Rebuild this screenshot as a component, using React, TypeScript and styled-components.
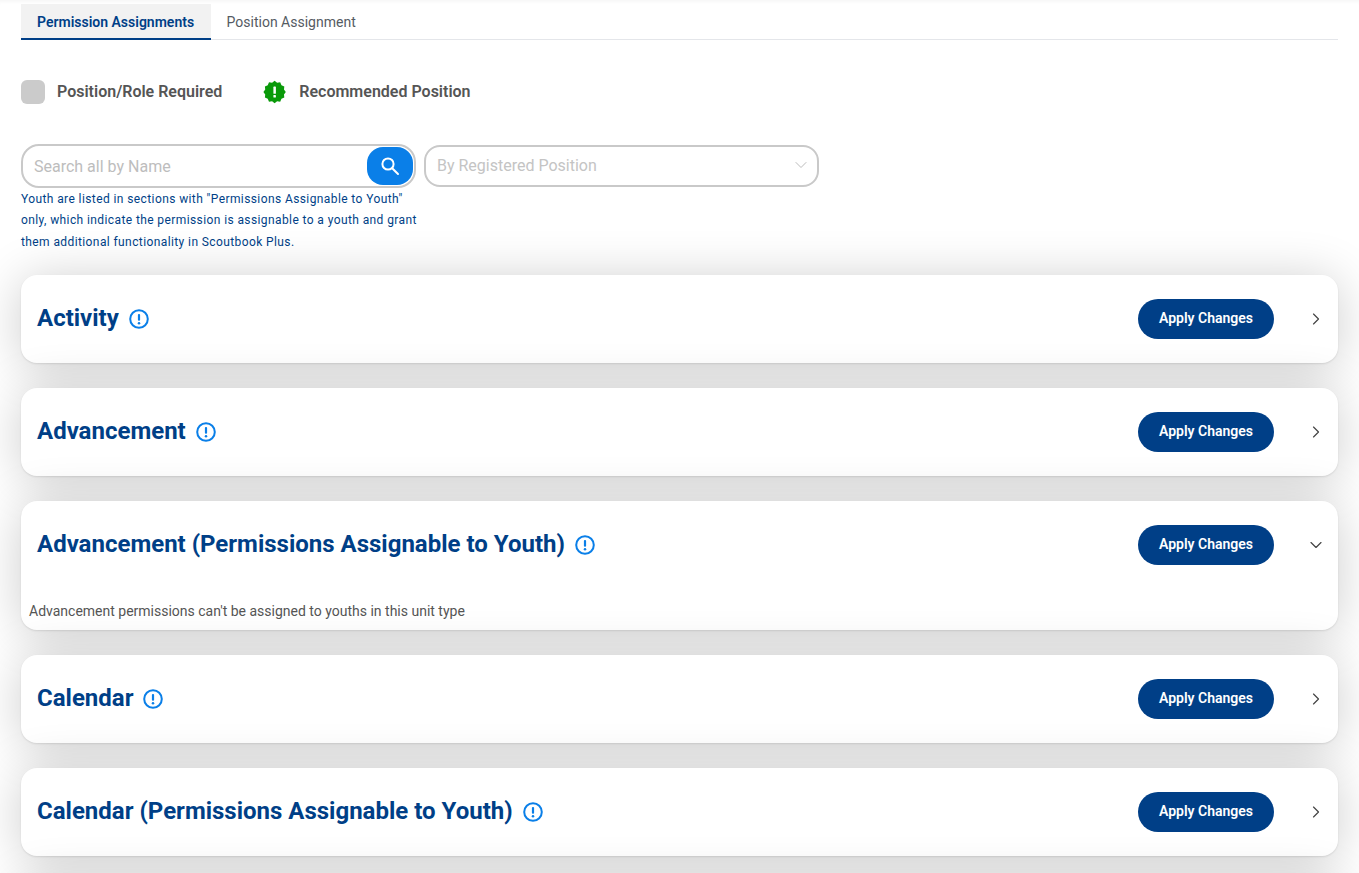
import React from 'react';
import styled, { createGlobalStyle } from 'styled-components';
import { ChevronRight, ChevronDown } from 'lucide-react';

const navy = '#003f87';
const blue = '#0a7fe8';

const GlobalStyle = createGlobalStyle`
  html, body {
    margin: 0;
    padding: 0;
    background: #fff;
    overflow: hidden;
  }
  body {
    font-family: Roboto, "Liberation Sans", sans-serif;
  }
`;

const Page = styled.div`
  height: 873px;
  padding: 4px 21px 0;
  box-sizing: border-box;
  overflow: hidden;
  box-shadow: inset 0 4px 4px -3px rgba(0, 0, 0, 0.05);
`;

const Tabs = styled.div`
  display: flex;
  height: 36px;
  border-bottom: 1px solid #e4e6ea;
  box-sizing: border-box;
`;

const Tab = styled.div<{ $active?: boolean }>`
  height: 36px;
  display: flex;
  align-items: center;
  font-size: 14px;
  box-sizing: border-box;
  padding: ${p => (p.$active ? '1px 16px 0 16px' : '0 16px 0 15.6px')};
  width: ${p => (p.$active ? '190px' : 'auto')};
  font-weight: ${p => (p.$active ? 600 : 400)};
  color: ${p => (p.$active ? navy : '#555b63')};
  background: ${p => (p.$active ? '#f2f2f2' : 'transparent')};
  border-bottom: ${p => (p.$active ? `2px solid ${navy}` : 'none')};
`;

const Legend = styled.div`
  display: flex;
  align-items: center;
  margin-top: 38px;
  height: 26px;
`;

const LegendItem = styled.div`
  display: flex;
  align-items: center;
  font-size: 16px;
  font-weight: 600;
  color: #555;
  margin-right: 41px;
`;

const Swatch = styled.span`
  width: 24px;
  height: 24px;
  margin-top: 2px;
  border-radius: 6px;
  background: #cbcbcb;
  margin-right: 12px;
`;

const Badge = styled.svg`
  width: 24px;
  height: 24px;
  margin-top: 2px;
  margin-right: 12px;
`;

const Filters = styled.div`
  display: flex;
  align-items: flex-start;
  gap: 8px;
  margin-top: 40px;
`;

const SearchColumn = styled.div`
  width: 395px;
`;

const SearchBox = styled.div`
  height: 44px;
  border: 2px solid #c9c9c9;
  border-radius: 18px;
  box-sizing: border-box;
  display: flex;
  align-items: center;
  justify-content: space-between;
  padding: 0 1px 0 11px;
  font-size: 16px;
  color: #bdbdbd;
`;

const SearchButton = styled.span`
  width: 46px;
  height: 38px;
  border-radius: 16px;
  background: ${blue};
  display: flex;
  align-items: center;
  justify-content: center;
`;

const Hint = styled.p`
  width: 402px;
  margin: 1px 0 0;
  font-size: 12px;
  line-height: 21.3px;
  letter-spacing: 0.4px;
  color: ${navy};
`;

const SelectBox = styled.div`
  width: 395px;
  height: 42px;
  margin-top: 1px;
  border: 2px solid #c9c9c9;
  border-radius: 16px;
  box-sizing: border-box;
  display: flex;
  align-items: center;
  justify-content: space-between;
  padding: 0 6px 2px 11px;
  font-size: 16px;
  color: #c4c4c4;
`;

const Cards = styled.div`
  display: flex;
  flex-direction: column;
  gap: 25px;
  margin-top: 22px;
`;

const Card = styled.section`
  background: #fff;
  border-radius: 16px;
  box-shadow: 0 1px 2px rgba(0, 0, 0, 0.1), 0 4px 50px rgba(0, 0, 0, 0.2);
`;

const NextCard = styled(Card)`
  height: 88px;
`;

const CardHeader = styled.div`
  height: 88px;
  padding: 0 12px 0 16px;
  display: flex;
  align-items: center;
`;

const CardTitle = styled.h2`
  margin: 0 10px 2px 0;
  font-size: 24px;
  font-weight: 700;
  color: ${navy};
`;

const InfoIcon = styled.svg`
  width: 20px;
  height: 20px;
  flex: none;
`;

const ApplyButton = styled.button`
  width: 136px;
  height: 40px;
  margin-left: auto;
  margin-right: 32px;
  padding: 0 0 2px;
  border: none;
  border-radius: 20px;
  background: ${navy};
  color: #fff;
  font-family: inherit;
  font-size: 14px;
  font-weight: 600;
`;

const Toggle = styled.span`
  width: 20px;
  display: flex;
  justify-content: center;
  color: #444;
`;

const CardNote = styled.div`
  padding: 11px 8px 8px;
  font-size: 14px;
  line-height: 22px;
  color: #555;
`;

const Info = () => (
  <InfoIcon viewBox="0 0 20 20" fill="none">
    <circle cx="10" cy="10" r="8.8" stroke={blue} strokeWidth="2" />
    <rect x="8.9" y="5" width="2.2" height="6.8" rx="1" fill={blue} />
    <circle cx="10" cy="14.3" r="1.25" fill={blue} />
  </InfoIcon>
);

const starPoints = Array.from({ length: 24 }, (_, i) => {
  const a = (i * Math.PI) / 12;
  const r = i % 2 === 0 ? 11.2 : 9.7;
  return `${(11.6 + r * Math.sin(a)).toFixed(2)},${(12 - r * Math.cos(a)).toFixed(2)}`;
}).join(' ');

const sections = [
  { title: 'Activity' },
  { title: 'Advancement' },
  {
    title: 'Advancement (Permissions Assignable to Youth)',
    note: "Advancement permissions can't be assigned to youths in this unit type",
  },
  { title: 'Calendar' },
  { title: 'Calendar (Permissions Assignable to Youth)' },
];

const App = () => {
  return (
    <Page>
      <GlobalStyle />
      <Tabs>
        <Tab $active>Permission Assignments</Tab>
        <Tab>Position Assignment</Tab>
      </Tabs>

      <Legend>
        <LegendItem>
          <Swatch />
          Position/Role Required
        </LegendItem>
        <LegendItem>
          <Badge viewBox="0 0 24 24">
            <polygon points={starPoints} fill="#0a9a0a" />
            <rect x="10.4" y="6.6" width="2.5" height="7.2" rx="0.6" fill="#fff" />
            <rect x="10.4" y="15" width="2.5" height="2.5" rx="0.6" fill="#fff" />
          </Badge>
          Recommended Position
        </LegendItem>
      </Legend>

      <Filters>
        <SearchColumn>
          <SearchBox>
            Search all by Name
            <SearchButton>
              <svg width="20" height="20" viewBox="0 0 20 20" fill="none" stroke="#fff" strokeWidth="2">
                <circle cx="8" cy="8" r="5.6" />
                <path d="M12.2 12.2 L18 18" strokeLinecap="round" />
              </svg>
            </SearchButton>
          </SearchBox>
          <Hint>
            Youth are listed in sections with "Permissions Assignable to Youth" only, which indicate the
            permission is assignable to a youth and grant them additional functionality in Scoutbook Plus.
          </Hint>
        </SearchColumn>
        <SelectBox>
          By Registered Position
          <ChevronDown size={20} strokeWidth={1.1} color="#b5b5b5" />
        </SelectBox>
      </Filters>

      <Cards>
        {sections.map(s => (
          <Card key={s.title}>
            <CardHeader>
              <CardTitle>{s.title}</CardTitle>
              <Info />
              <ApplyButton>Apply Changes</ApplyButton>
              <Toggle>
                {s.note ? <ChevronDown size={20} strokeWidth={1.4} /> : <ChevronRight size={20} strokeWidth={1.4} />}
              </Toggle>
            </CardHeader>
            {s.note && <CardNote>{s.note}</CardNote>}
          </Card>
        ))}
        {/* the list carries on below the fold, its shadow still falls on the last row */}
        <NextCard />
      </Cards>
    </Page>
  );
};

export default App;
